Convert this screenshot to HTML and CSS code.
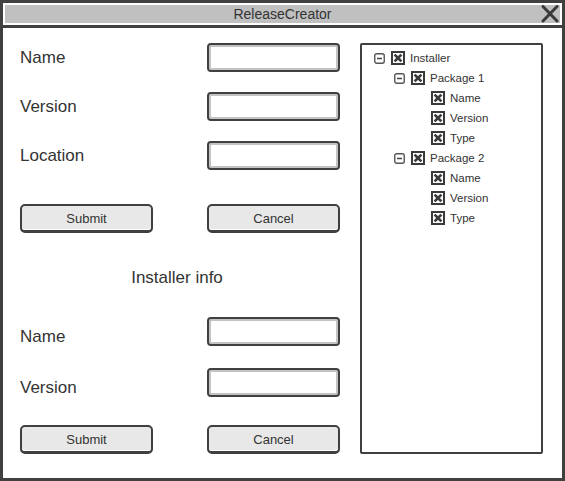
FILE: index.html
```html
<!DOCTYPE html>
<html>
<head>
<meta charset="utf-8">
<title>ReleaseCreator</title>
<link rel="stylesheet" href="styles.css">
</head>
<body>
<div class="window">
  <div class="header">
    <div class="titlebar">
      <span></span>
      <span class="title">ReleaseCreator</span>
      <svg class="close" width="20" height="18" viewBox="0 0 20 18"><path d="M3 1.5 L17 16 M17 1.5 L3 16" stroke="#3a3a3a" stroke-width="3" stroke-linecap="round" fill="none"/></svg>
    </div>
  </div>
  <div class="content">
    <div class="form">
      <div class="row"><span class="label">Name</span><div class="input"></div></div>
      <div class="row gap20"><span class="label">Version</span><div class="input"></div></div>
      <div class="row gap20"><span class="label">Location</span><div class="input"></div></div>
      <div class="row buttons gap34"><div class="btn">Submit</div><div class="btn">Cancel</div></div>
      <div class="heading">Installer info</div>
      <div class="row gap29"><span class="label low">Name</span><div class="input"></div></div>
      <div class="row gap22"><span class="label low">Version</span><div class="input"></div></div>
      <div class="row buttons gap28"><div class="btn">Submit</div><div class="btn">Cancel</div></div>
    </div>
    <div class="tree">
      <div class="node l0"><svg class="tog" width="11" height="11" viewBox="0 0 11 11"><rect x="0.75" y="0.75" width="9.5" height="9.5" rx="2" fill="#fff" stroke="#555" stroke-width="1.4"/><path d="M3 5.5 H8" stroke="#444" stroke-width="1.5"/></svg><svg class="cb" width="14" height="14" viewBox="0 0 14 14"><rect x="1" y="1" width="12" height="12" fill="#fff" stroke="#3a3a3a" stroke-width="2"/><path d="M3.6 3.6 L10.4 10.4 M10.4 3.6 L3.6 10.4" stroke="#3a3a3a" stroke-width="2.7"/></svg><span>Installer</span></div>
      <div class="node l1"><svg class="tog" width="11" height="11" viewBox="0 0 11 11"><rect x="0.75" y="0.75" width="9.5" height="9.5" rx="2" fill="#fff" stroke="#555" stroke-width="1.4"/><path d="M3 5.5 H8" stroke="#444" stroke-width="1.5"/></svg><svg class="cb" width="14" height="14" viewBox="0 0 14 14"><rect x="1" y="1" width="12" height="12" fill="#fff" stroke="#3a3a3a" stroke-width="2"/><path d="M3.6 3.6 L10.4 10.4 M10.4 3.6 L3.6 10.4" stroke="#3a3a3a" stroke-width="2.7"/></svg><span>Package 1</span></div>
      <div class="node l2"><span class="tog"></span><svg class="cb" width="14" height="14" viewBox="0 0 14 14"><rect x="1" y="1" width="12" height="12" fill="#fff" stroke="#3a3a3a" stroke-width="2"/><path d="M3.6 3.6 L10.4 10.4 M10.4 3.6 L3.6 10.4" stroke="#3a3a3a" stroke-width="2.7"/></svg><span>Name</span></div>
      <div class="node l2"><span class="tog"></span><svg class="cb" width="14" height="14" viewBox="0 0 14 14"><rect x="1" y="1" width="12" height="12" fill="#fff" stroke="#3a3a3a" stroke-width="2"/><path d="M3.6 3.6 L10.4 10.4 M10.4 3.6 L3.6 10.4" stroke="#3a3a3a" stroke-width="2.7"/></svg><span>Version</span></div>
      <div class="node l2"><span class="tog"></span><svg class="cb" width="14" height="14" viewBox="0 0 14 14"><rect x="1" y="1" width="12" height="12" fill="#fff" stroke="#3a3a3a" stroke-width="2"/><path d="M3.6 3.6 L10.4 10.4 M10.4 3.6 L3.6 10.4" stroke="#3a3a3a" stroke-width="2.7"/></svg><span>Type</span></div>
      <div class="node l1"><svg class="tog" width="11" height="11" viewBox="0 0 11 11"><rect x="0.75" y="0.75" width="9.5" height="9.5" rx="2" fill="#fff" stroke="#555" stroke-width="1.4"/><path d="M3 5.5 H8" stroke="#444" stroke-width="1.5"/></svg><svg class="cb" width="14" height="14" viewBox="0 0 14 14"><rect x="1" y="1" width="12" height="12" fill="#fff" stroke="#3a3a3a" stroke-width="2"/><path d="M3.6 3.6 L10.4 10.4 M10.4 3.6 L3.6 10.4" stroke="#3a3a3a" stroke-width="2.7"/></svg><span>Package 2</span></div>
      <div class="node l2"><span class="tog"></span><svg class="cb" width="14" height="14" viewBox="0 0 14 14"><rect x="1" y="1" width="12" height="12" fill="#fff" stroke="#3a3a3a" stroke-width="2"/><path d="M3.6 3.6 L10.4 10.4 M10.4 3.6 L3.6 10.4" stroke="#3a3a3a" stroke-width="2.7"/></svg><span>Name</span></div>
      <div class="node l2"><span class="tog"></span><svg class="cb" width="14" height="14" viewBox="0 0 14 14"><rect x="1" y="1" width="12" height="12" fill="#fff" stroke="#3a3a3a" stroke-width="2"/><path d="M3.6 3.6 L10.4 10.4 M10.4 3.6 L3.6 10.4" stroke="#3a3a3a" stroke-width="2.7"/></svg><span>Version</span></div>
      <div class="node l2"><span class="tog"></span><svg class="cb" width="14" height="14" viewBox="0 0 14 14"><rect x="1" y="1" width="12" height="12" fill="#fff" stroke="#3a3a3a" stroke-width="2"/><path d="M3.6 3.6 L10.4 10.4 M10.4 3.6 L3.6 10.4" stroke="#3a3a3a" stroke-width="2.7"/></svg><span>Type</span></div>
    </div>
  </div>
</div>
</body>
</html>
```
FILE: styles.css
```css
html, body {
  margin: 0;
  padding: 0;
  background: #fff;
}
body {
  font-family: "Liberation Sans", Arial, sans-serif;
  color: #333;
}
.window {
  box-sizing: border-box;
  width: 565px;
  height: 481px;
  border: 3px solid #404040;
  background: #fff;
  display: flex;
  flex-direction: column;
}
.header {
  padding: 2px 2px 2px 2px;
  border-bottom: 3px solid #404040;
}
.titlebar {
  height: 18px;
  background: #c0c0c0;
  display: grid;
  grid-template-columns: 1fr auto 1fr;
  align-items: center;
}
.title {
  font-size: 14px;
  color: #333;
  line-height: 18px;
}
.close {
  justify-self: end;
  display: block;
}
.content {
  flex: 1;
  display: flex;
  padding: 15px 19px 24px 17px;
  gap: 20px;
}
.form {
  width: 320px;
  display: flex;
  flex-direction: column;
}
.row {
  height: 29px;
  display: flex;
  align-items: center;
  justify-content: space-between;
}
.gap20 { margin-top: 20px; }
.gap22 { margin-top: 22px; }
.gap28 { margin-top: 28px; }
.gap29 { margin-top: 29px; }
.gap34 { margin-top: 34px; }
.label {
  font-size: 17px;
  color: #333;
}
.label.low {
  padding-top: 10px;
}
.input {
  box-sizing: border-box;
  width: 133px;
  height: 29px;
  border: 2px solid #404040;
  border-radius: 4px;
  box-shadow: inset 0 0 0 2px #c4c4c4;
  background: #fff;
}
.btn {
  box-sizing: border-box;
  width: 133px;
  height: 29px;
  border: 2px solid #404040;
  border-bottom-width: 3px;
  border-radius: 5px;
  background: #e8e8e8;
  box-shadow: inset 0 -1px 0 #fff;
  display: flex;
  align-items: center;
  justify-content: center;
  font-size: 13px;
  color: #333;
}
.heading {
  margin-top: 35px;
  height: 20px;
  line-height: 20px;
  text-align: center;
  font-size: 17px;
  color: #333;
  padding-right: 6px;
}
.tree {
  box-sizing: border-box;
  width: 183px;
  border: 2px solid #404040;
  border-radius: 2px;
  padding: 3px 0 0 12px;
}
.node {
  height: 20px;
  display: flex;
  align-items: center;
  font-size: 11.5px;
  color: #333;
}
.node .tog {
  width: 11px;
  height: 11px;
  flex: none;
  display: block;
}
.node .cb {
  margin-left: 6px;
  margin-right: 5px;
  display: block;
  flex: none;
}
.l1 { padding-left: 20px; }
.l2 { padding-left: 40px; }
```
